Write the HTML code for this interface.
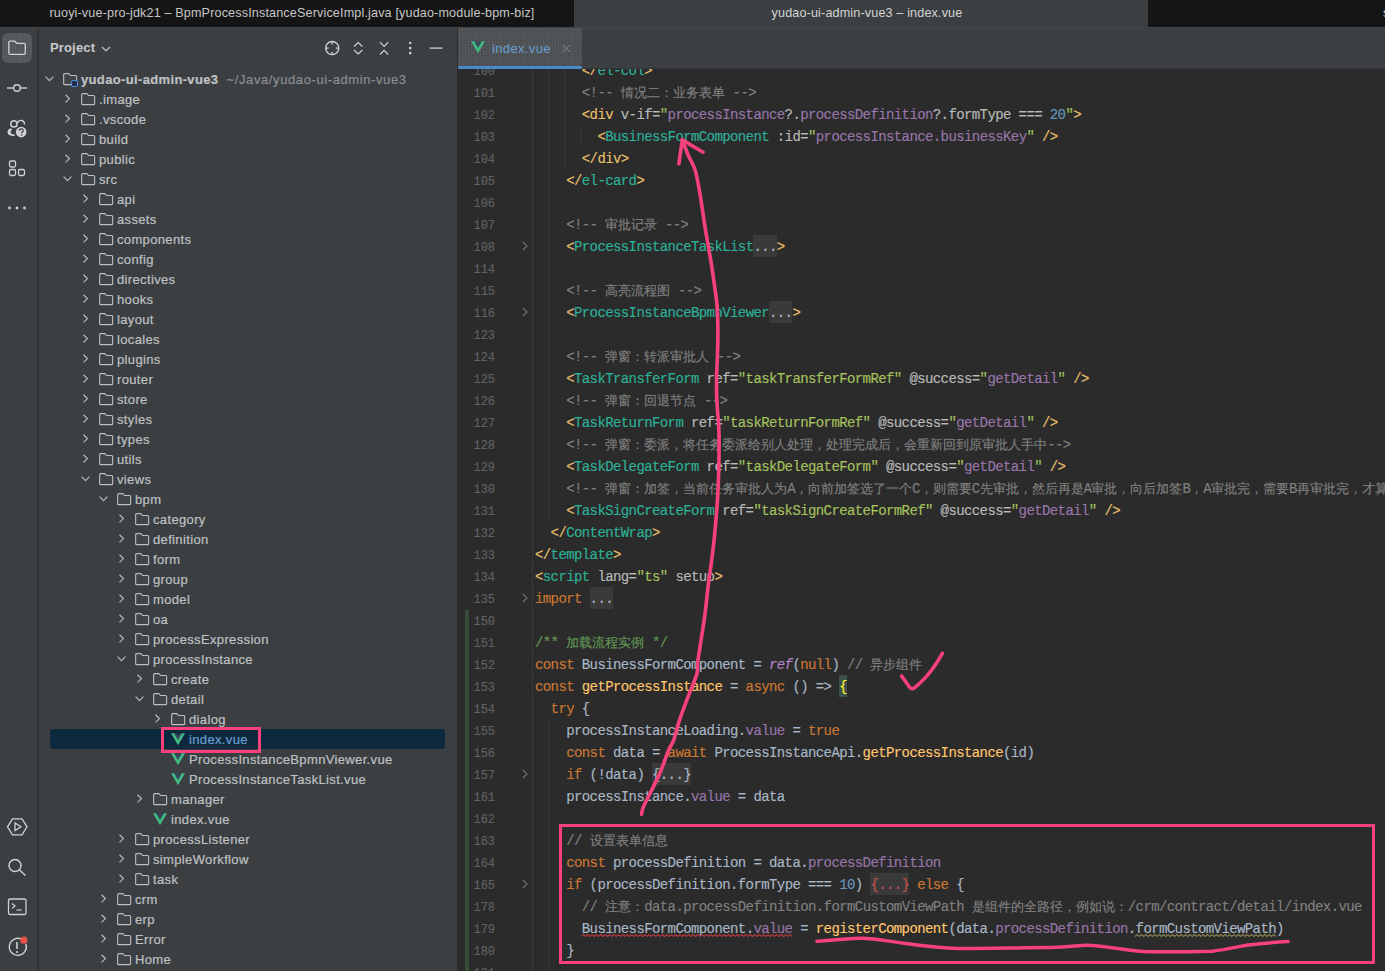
<!DOCTYPE html><html><head><meta charset="utf-8"><style>
*{box-sizing:border-box}
html,body{margin:0;padding:0}
body{width:1385px;height:971px;overflow:hidden;position:relative;background:#2b2b2b;font-family:"Liberation Sans",sans-serif}
.a{position:absolute}
.tr{position:absolute;height:20px;line-height:21px;font-size:13px;letter-spacing:0.35px;-webkit-text-stroke:0.2px currentColor;color:#bfc1c4;white-space:nowrap}
.cl{position:absolute;left:535px;width:850px;height:22px;line-height:23px;font-family:"Liberation Mono",monospace;font-size:14px;letter-spacing:-0.6px;white-space:pre;color:#a9b7c6;-webkit-text-stroke:0.15px currentColor}
.ck,.cj{position:absolute;top:0}
.cj{width:13px;font-size:13px;letter-spacing:0;overflow:hidden}
.fb{position:absolute;top:-1px;height:22px}
.ln{position:absolute;left:460px;width:34.75px;text-align:right;height:22px;line-height:25px;font-family:"Liberation Mono",monospace;font-size:12px;letter-spacing:-0.15px;color:#5f6265;-webkit-text-stroke:0.15px currentColor}
</style></head><body>

<div class="a" style="left:0;top:0;width:1385px;height:27px;background:#151515"></div>
<div class="a" style="left:574px;top:0;width:574px;height:27px;background:#3c3f41"></div>
<div class="a" style="left:5px;top:0;width:574px;height:27px;line-height:26px;text-align:center;font-size:12.6px;letter-spacing:0.15px;color:#c6c6c6">ruoyi-vue-pro-jdk21 – BpmProcessInstanceServiceImpl.java [yudao-module-bpm-biz]</div>
<div class="a" style="left:580px;top:0;width:574px;height:27px;line-height:26px;text-align:center;font-size:12.6px;letter-spacing:0.15px;color:#d4d4d4">yudao-ui-admin-vue3 – index.vue</div>
<div class="a" style="left:1383px;top:0;width:2px;height:27px;overflow:hidden"><div style="position:absolute;left:0;top:0;line-height:26px;font-size:12.6px;color:#c6c6c6">s</div></div>
<div class="a" style="left:0;top:27px;width:37px;height:944px;background:#3c3f41"></div>
<div class="a" style="left:37px;top:27px;width:2px;height:944px;background:#313335"></div>
<div class="a" style="left:39px;top:27px;width:418px;height:944px;background:#3c3f41"></div>
<div class="a" style="left:457px;top:27px;width:1px;height:944px;background:#2b2b2b"></div>
<div class="a" style="left:458px;top:27px;width:927px;height:42px;background:#3c3f41"></div>
<div class="a" style="left:50px;top:37px;height:20px;line-height:22px;font-size:13px;font-weight:bold;letter-spacing:0.15px;color:#c9cacc">Project</div>
<svg width="12" height="8" viewBox="0 0 12 8" style="position:absolute;left:44px;top:75px"><path d="M1.6 1.7L5.5 5.6 9.4 1.7" fill="none" stroke="#b8babd" stroke-width="1.2"/></svg>
<svg width="16" height="20" viewBox="0 0 16 20" style="position:absolute;left:62px;top:69px"><path d="M1.65 5.65c0-.55.45-1 1-1h4.2l1.8 1.9h5c.55 0 1 .45 1 1v7.1c0 .55-.45 1-1 1H2.65c-.55 0-1-.45-1-1z" fill="#414448" stroke="#bcbec1" stroke-width="1.1"/></svg>
<div class="tr" style="left:81px;top:69px;color:#bfc1c4;font-weight:bold">yudao-ui-admin-vue3 <span style="font-weight:normal;color:#8c8e91;letter-spacing:0.6px">&nbsp;~/Java/yudao-ui-admin-vue3</span></div>
<svg width="8" height="10" viewBox="0 0 8 10" style="position:absolute;left:64px;top:94px"><path d="M1.5 0.8L5.4 4.6 1.5 8.4" fill="none" stroke="#b8babd" stroke-width="1.2"/></svg>
<svg width="16" height="20" viewBox="0 0 16 20" style="position:absolute;left:80px;top:89px"><path d="M1.65 5.65c0-.55.45-1 1-1h4.2l1.8 1.9h5c.55 0 1 .45 1 1v7.1c0 .55-.45 1-1 1H2.65c-.55 0-1-.45-1-1z" fill="#414448" stroke="#bcbec1" stroke-width="1.1"/></svg>
<div class="tr" style="left:99px;top:89px;color:#bfc1c4;font-weight:normal">.image</div>
<svg width="8" height="10" viewBox="0 0 8 10" style="position:absolute;left:64px;top:114px"><path d="M1.5 0.8L5.4 4.6 1.5 8.4" fill="none" stroke="#b8babd" stroke-width="1.2"/></svg>
<svg width="16" height="20" viewBox="0 0 16 20" style="position:absolute;left:80px;top:109px"><path d="M1.65 5.65c0-.55.45-1 1-1h4.2l1.8 1.9h5c.55 0 1 .45 1 1v7.1c0 .55-.45 1-1 1H2.65c-.55 0-1-.45-1-1z" fill="#414448" stroke="#bcbec1" stroke-width="1.1"/></svg>
<div class="tr" style="left:99px;top:109px;color:#bfc1c4;font-weight:normal">.vscode</div>
<svg width="8" height="10" viewBox="0 0 8 10" style="position:absolute;left:64px;top:134px"><path d="M1.5 0.8L5.4 4.6 1.5 8.4" fill="none" stroke="#b8babd" stroke-width="1.2"/></svg>
<svg width="16" height="20" viewBox="0 0 16 20" style="position:absolute;left:80px;top:129px"><path d="M1.65 5.65c0-.55.45-1 1-1h4.2l1.8 1.9h5c.55 0 1 .45 1 1v7.1c0 .55-.45 1-1 1H2.65c-.55 0-1-.45-1-1z" fill="#414448" stroke="#bcbec1" stroke-width="1.1"/></svg>
<div class="tr" style="left:99px;top:129px;color:#bfc1c4;font-weight:normal">build</div>
<svg width="8" height="10" viewBox="0 0 8 10" style="position:absolute;left:64px;top:154px"><path d="M1.5 0.8L5.4 4.6 1.5 8.4" fill="none" stroke="#b8babd" stroke-width="1.2"/></svg>
<svg width="16" height="20" viewBox="0 0 16 20" style="position:absolute;left:80px;top:149px"><path d="M1.65 5.65c0-.55.45-1 1-1h4.2l1.8 1.9h5c.55 0 1 .45 1 1v7.1c0 .55-.45 1-1 1H2.65c-.55 0-1-.45-1-1z" fill="#414448" stroke="#bcbec1" stroke-width="1.1"/></svg>
<div class="tr" style="left:99px;top:149px;color:#bfc1c4;font-weight:normal">public</div>
<svg width="12" height="8" viewBox="0 0 12 8" style="position:absolute;left:62px;top:175px"><path d="M1.6 1.7L5.5 5.6 9.4 1.7" fill="none" stroke="#b8babd" stroke-width="1.2"/></svg>
<svg width="16" height="20" viewBox="0 0 16 20" style="position:absolute;left:80px;top:169px"><path d="M1.65 5.65c0-.55.45-1 1-1h4.2l1.8 1.9h5c.55 0 1 .45 1 1v7.1c0 .55-.45 1-1 1H2.65c-.55 0-1-.45-1-1z" fill="#414448" stroke="#bcbec1" stroke-width="1.1"/></svg>
<div class="tr" style="left:99px;top:169px;color:#bfc1c4;font-weight:normal">src</div>
<svg width="8" height="10" viewBox="0 0 8 10" style="position:absolute;left:82px;top:194px"><path d="M1.5 0.8L5.4 4.6 1.5 8.4" fill="none" stroke="#b8babd" stroke-width="1.2"/></svg>
<svg width="16" height="20" viewBox="0 0 16 20" style="position:absolute;left:98px;top:189px"><path d="M1.65 5.65c0-.55.45-1 1-1h4.2l1.8 1.9h5c.55 0 1 .45 1 1v7.1c0 .55-.45 1-1 1H2.65c-.55 0-1-.45-1-1z" fill="#414448" stroke="#bcbec1" stroke-width="1.1"/></svg>
<div class="tr" style="left:117px;top:189px;color:#bfc1c4;font-weight:normal">api</div>
<svg width="8" height="10" viewBox="0 0 8 10" style="position:absolute;left:82px;top:214px"><path d="M1.5 0.8L5.4 4.6 1.5 8.4" fill="none" stroke="#b8babd" stroke-width="1.2"/></svg>
<svg width="16" height="20" viewBox="0 0 16 20" style="position:absolute;left:98px;top:209px"><path d="M1.65 5.65c0-.55.45-1 1-1h4.2l1.8 1.9h5c.55 0 1 .45 1 1v7.1c0 .55-.45 1-1 1H2.65c-.55 0-1-.45-1-1z" fill="#414448" stroke="#bcbec1" stroke-width="1.1"/></svg>
<div class="tr" style="left:117px;top:209px;color:#bfc1c4;font-weight:normal">assets</div>
<svg width="8" height="10" viewBox="0 0 8 10" style="position:absolute;left:82px;top:234px"><path d="M1.5 0.8L5.4 4.6 1.5 8.4" fill="none" stroke="#b8babd" stroke-width="1.2"/></svg>
<svg width="16" height="20" viewBox="0 0 16 20" style="position:absolute;left:98px;top:229px"><path d="M1.65 5.65c0-.55.45-1 1-1h4.2l1.8 1.9h5c.55 0 1 .45 1 1v7.1c0 .55-.45 1-1 1H2.65c-.55 0-1-.45-1-1z" fill="#414448" stroke="#bcbec1" stroke-width="1.1"/></svg>
<div class="tr" style="left:117px;top:229px;color:#bfc1c4;font-weight:normal">components</div>
<svg width="8" height="10" viewBox="0 0 8 10" style="position:absolute;left:82px;top:254px"><path d="M1.5 0.8L5.4 4.6 1.5 8.4" fill="none" stroke="#b8babd" stroke-width="1.2"/></svg>
<svg width="16" height="20" viewBox="0 0 16 20" style="position:absolute;left:98px;top:249px"><path d="M1.65 5.65c0-.55.45-1 1-1h4.2l1.8 1.9h5c.55 0 1 .45 1 1v7.1c0 .55-.45 1-1 1H2.65c-.55 0-1-.45-1-1z" fill="#414448" stroke="#bcbec1" stroke-width="1.1"/></svg>
<div class="tr" style="left:117px;top:249px;color:#bfc1c4;font-weight:normal">config</div>
<svg width="8" height="10" viewBox="0 0 8 10" style="position:absolute;left:82px;top:274px"><path d="M1.5 0.8L5.4 4.6 1.5 8.4" fill="none" stroke="#b8babd" stroke-width="1.2"/></svg>
<svg width="16" height="20" viewBox="0 0 16 20" style="position:absolute;left:98px;top:269px"><path d="M1.65 5.65c0-.55.45-1 1-1h4.2l1.8 1.9h5c.55 0 1 .45 1 1v7.1c0 .55-.45 1-1 1H2.65c-.55 0-1-.45-1-1z" fill="#414448" stroke="#bcbec1" stroke-width="1.1"/></svg>
<div class="tr" style="left:117px;top:269px;color:#bfc1c4;font-weight:normal">directives</div>
<svg width="8" height="10" viewBox="0 0 8 10" style="position:absolute;left:82px;top:294px"><path d="M1.5 0.8L5.4 4.6 1.5 8.4" fill="none" stroke="#b8babd" stroke-width="1.2"/></svg>
<svg width="16" height="20" viewBox="0 0 16 20" style="position:absolute;left:98px;top:289px"><path d="M1.65 5.65c0-.55.45-1 1-1h4.2l1.8 1.9h5c.55 0 1 .45 1 1v7.1c0 .55-.45 1-1 1H2.65c-.55 0-1-.45-1-1z" fill="#414448" stroke="#bcbec1" stroke-width="1.1"/></svg>
<div class="tr" style="left:117px;top:289px;color:#bfc1c4;font-weight:normal">hooks</div>
<svg width="8" height="10" viewBox="0 0 8 10" style="position:absolute;left:82px;top:314px"><path d="M1.5 0.8L5.4 4.6 1.5 8.4" fill="none" stroke="#b8babd" stroke-width="1.2"/></svg>
<svg width="16" height="20" viewBox="0 0 16 20" style="position:absolute;left:98px;top:309px"><path d="M1.65 5.65c0-.55.45-1 1-1h4.2l1.8 1.9h5c.55 0 1 .45 1 1v7.1c0 .55-.45 1-1 1H2.65c-.55 0-1-.45-1-1z" fill="#414448" stroke="#bcbec1" stroke-width="1.1"/></svg>
<div class="tr" style="left:117px;top:309px;color:#bfc1c4;font-weight:normal">layout</div>
<svg width="8" height="10" viewBox="0 0 8 10" style="position:absolute;left:82px;top:334px"><path d="M1.5 0.8L5.4 4.6 1.5 8.4" fill="none" stroke="#b8babd" stroke-width="1.2"/></svg>
<svg width="16" height="20" viewBox="0 0 16 20" style="position:absolute;left:98px;top:329px"><path d="M1.65 5.65c0-.55.45-1 1-1h4.2l1.8 1.9h5c.55 0 1 .45 1 1v7.1c0 .55-.45 1-1 1H2.65c-.55 0-1-.45-1-1z" fill="#414448" stroke="#bcbec1" stroke-width="1.1"/></svg>
<div class="tr" style="left:117px;top:329px;color:#bfc1c4;font-weight:normal">locales</div>
<svg width="8" height="10" viewBox="0 0 8 10" style="position:absolute;left:82px;top:354px"><path d="M1.5 0.8L5.4 4.6 1.5 8.4" fill="none" stroke="#b8babd" stroke-width="1.2"/></svg>
<svg width="16" height="20" viewBox="0 0 16 20" style="position:absolute;left:98px;top:349px"><path d="M1.65 5.65c0-.55.45-1 1-1h4.2l1.8 1.9h5c.55 0 1 .45 1 1v7.1c0 .55-.45 1-1 1H2.65c-.55 0-1-.45-1-1z" fill="#414448" stroke="#bcbec1" stroke-width="1.1"/></svg>
<div class="tr" style="left:117px;top:349px;color:#bfc1c4;font-weight:normal">plugins</div>
<svg width="8" height="10" viewBox="0 0 8 10" style="position:absolute;left:82px;top:374px"><path d="M1.5 0.8L5.4 4.6 1.5 8.4" fill="none" stroke="#b8babd" stroke-width="1.2"/></svg>
<svg width="16" height="20" viewBox="0 0 16 20" style="position:absolute;left:98px;top:369px"><path d="M1.65 5.65c0-.55.45-1 1-1h4.2l1.8 1.9h5c.55 0 1 .45 1 1v7.1c0 .55-.45 1-1 1H2.65c-.55 0-1-.45-1-1z" fill="#414448" stroke="#bcbec1" stroke-width="1.1"/></svg>
<div class="tr" style="left:117px;top:369px;color:#bfc1c4;font-weight:normal">router</div>
<svg width="8" height="10" viewBox="0 0 8 10" style="position:absolute;left:82px;top:394px"><path d="M1.5 0.8L5.4 4.6 1.5 8.4" fill="none" stroke="#b8babd" stroke-width="1.2"/></svg>
<svg width="16" height="20" viewBox="0 0 16 20" style="position:absolute;left:98px;top:389px"><path d="M1.65 5.65c0-.55.45-1 1-1h4.2l1.8 1.9h5c.55 0 1 .45 1 1v7.1c0 .55-.45 1-1 1H2.65c-.55 0-1-.45-1-1z" fill="#414448" stroke="#bcbec1" stroke-width="1.1"/></svg>
<div class="tr" style="left:117px;top:389px;color:#bfc1c4;font-weight:normal">store</div>
<svg width="8" height="10" viewBox="0 0 8 10" style="position:absolute;left:82px;top:414px"><path d="M1.5 0.8L5.4 4.6 1.5 8.4" fill="none" stroke="#b8babd" stroke-width="1.2"/></svg>
<svg width="16" height="20" viewBox="0 0 16 20" style="position:absolute;left:98px;top:409px"><path d="M1.65 5.65c0-.55.45-1 1-1h4.2l1.8 1.9h5c.55 0 1 .45 1 1v7.1c0 .55-.45 1-1 1H2.65c-.55 0-1-.45-1-1z" fill="#414448" stroke="#bcbec1" stroke-width="1.1"/></svg>
<div class="tr" style="left:117px;top:409px;color:#bfc1c4;font-weight:normal">styles</div>
<svg width="8" height="10" viewBox="0 0 8 10" style="position:absolute;left:82px;top:434px"><path d="M1.5 0.8L5.4 4.6 1.5 8.4" fill="none" stroke="#b8babd" stroke-width="1.2"/></svg>
<svg width="16" height="20" viewBox="0 0 16 20" style="position:absolute;left:98px;top:429px"><path d="M1.65 5.65c0-.55.45-1 1-1h4.2l1.8 1.9h5c.55 0 1 .45 1 1v7.1c0 .55-.45 1-1 1H2.65c-.55 0-1-.45-1-1z" fill="#414448" stroke="#bcbec1" stroke-width="1.1"/></svg>
<div class="tr" style="left:117px;top:429px;color:#bfc1c4;font-weight:normal">types</div>
<svg width="8" height="10" viewBox="0 0 8 10" style="position:absolute;left:82px;top:454px"><path d="M1.5 0.8L5.4 4.6 1.5 8.4" fill="none" stroke="#b8babd" stroke-width="1.2"/></svg>
<svg width="16" height="20" viewBox="0 0 16 20" style="position:absolute;left:98px;top:449px"><path d="M1.65 5.65c0-.55.45-1 1-1h4.2l1.8 1.9h5c.55 0 1 .45 1 1v7.1c0 .55-.45 1-1 1H2.65c-.55 0-1-.45-1-1z" fill="#414448" stroke="#bcbec1" stroke-width="1.1"/></svg>
<div class="tr" style="left:117px;top:449px;color:#bfc1c4;font-weight:normal">utils</div>
<svg width="12" height="8" viewBox="0 0 12 8" style="position:absolute;left:80px;top:475px"><path d="M1.6 1.7L5.5 5.6 9.4 1.7" fill="none" stroke="#b8babd" stroke-width="1.2"/></svg>
<svg width="16" height="20" viewBox="0 0 16 20" style="position:absolute;left:98px;top:469px"><path d="M1.65 5.65c0-.55.45-1 1-1h4.2l1.8 1.9h5c.55 0 1 .45 1 1v7.1c0 .55-.45 1-1 1H2.65c-.55 0-1-.45-1-1z" fill="#414448" stroke="#bcbec1" stroke-width="1.1"/></svg>
<div class="tr" style="left:117px;top:469px;color:#bfc1c4;font-weight:normal">views</div>
<svg width="12" height="8" viewBox="0 0 12 8" style="position:absolute;left:98px;top:495px"><path d="M1.6 1.7L5.5 5.6 9.4 1.7" fill="none" stroke="#b8babd" stroke-width="1.2"/></svg>
<svg width="16" height="20" viewBox="0 0 16 20" style="position:absolute;left:116px;top:489px"><path d="M1.65 5.65c0-.55.45-1 1-1h4.2l1.8 1.9h5c.55 0 1 .45 1 1v7.1c0 .55-.45 1-1 1H2.65c-.55 0-1-.45-1-1z" fill="#414448" stroke="#bcbec1" stroke-width="1.1"/></svg>
<div class="tr" style="left:135px;top:489px;color:#bfc1c4;font-weight:normal">bpm</div>
<svg width="8" height="10" viewBox="0 0 8 10" style="position:absolute;left:118px;top:514px"><path d="M1.5 0.8L5.4 4.6 1.5 8.4" fill="none" stroke="#b8babd" stroke-width="1.2"/></svg>
<svg width="16" height="20" viewBox="0 0 16 20" style="position:absolute;left:134px;top:509px"><path d="M1.65 5.65c0-.55.45-1 1-1h4.2l1.8 1.9h5c.55 0 1 .45 1 1v7.1c0 .55-.45 1-1 1H2.65c-.55 0-1-.45-1-1z" fill="#414448" stroke="#bcbec1" stroke-width="1.1"/></svg>
<div class="tr" style="left:153px;top:509px;color:#bfc1c4;font-weight:normal">category</div>
<svg width="8" height="10" viewBox="0 0 8 10" style="position:absolute;left:118px;top:534px"><path d="M1.5 0.8L5.4 4.6 1.5 8.4" fill="none" stroke="#b8babd" stroke-width="1.2"/></svg>
<svg width="16" height="20" viewBox="0 0 16 20" style="position:absolute;left:134px;top:529px"><path d="M1.65 5.65c0-.55.45-1 1-1h4.2l1.8 1.9h5c.55 0 1 .45 1 1v7.1c0 .55-.45 1-1 1H2.65c-.55 0-1-.45-1-1z" fill="#414448" stroke="#bcbec1" stroke-width="1.1"/></svg>
<div class="tr" style="left:153px;top:529px;color:#bfc1c4;font-weight:normal">definition</div>
<svg width="8" height="10" viewBox="0 0 8 10" style="position:absolute;left:118px;top:554px"><path d="M1.5 0.8L5.4 4.6 1.5 8.4" fill="none" stroke="#b8babd" stroke-width="1.2"/></svg>
<svg width="16" height="20" viewBox="0 0 16 20" style="position:absolute;left:134px;top:549px"><path d="M1.65 5.65c0-.55.45-1 1-1h4.2l1.8 1.9h5c.55 0 1 .45 1 1v7.1c0 .55-.45 1-1 1H2.65c-.55 0-1-.45-1-1z" fill="#414448" stroke="#bcbec1" stroke-width="1.1"/></svg>
<div class="tr" style="left:153px;top:549px;color:#bfc1c4;font-weight:normal">form</div>
<svg width="8" height="10" viewBox="0 0 8 10" style="position:absolute;left:118px;top:574px"><path d="M1.5 0.8L5.4 4.6 1.5 8.4" fill="none" stroke="#b8babd" stroke-width="1.2"/></svg>
<svg width="16" height="20" viewBox="0 0 16 20" style="position:absolute;left:134px;top:569px"><path d="M1.65 5.65c0-.55.45-1 1-1h4.2l1.8 1.9h5c.55 0 1 .45 1 1v7.1c0 .55-.45 1-1 1H2.65c-.55 0-1-.45-1-1z" fill="#414448" stroke="#bcbec1" stroke-width="1.1"/></svg>
<div class="tr" style="left:153px;top:569px;color:#bfc1c4;font-weight:normal">group</div>
<svg width="8" height="10" viewBox="0 0 8 10" style="position:absolute;left:118px;top:594px"><path d="M1.5 0.8L5.4 4.6 1.5 8.4" fill="none" stroke="#b8babd" stroke-width="1.2"/></svg>
<svg width="16" height="20" viewBox="0 0 16 20" style="position:absolute;left:134px;top:589px"><path d="M1.65 5.65c0-.55.45-1 1-1h4.2l1.8 1.9h5c.55 0 1 .45 1 1v7.1c0 .55-.45 1-1 1H2.65c-.55 0-1-.45-1-1z" fill="#414448" stroke="#bcbec1" stroke-width="1.1"/></svg>
<div class="tr" style="left:153px;top:589px;color:#bfc1c4;font-weight:normal">model</div>
<svg width="8" height="10" viewBox="0 0 8 10" style="position:absolute;left:118px;top:614px"><path d="M1.5 0.8L5.4 4.6 1.5 8.4" fill="none" stroke="#b8babd" stroke-width="1.2"/></svg>
<svg width="16" height="20" viewBox="0 0 16 20" style="position:absolute;left:134px;top:609px"><path d="M1.65 5.65c0-.55.45-1 1-1h4.2l1.8 1.9h5c.55 0 1 .45 1 1v7.1c0 .55-.45 1-1 1H2.65c-.55 0-1-.45-1-1z" fill="#414448" stroke="#bcbec1" stroke-width="1.1"/></svg>
<div class="tr" style="left:153px;top:609px;color:#bfc1c4;font-weight:normal">oa</div>
<svg width="8" height="10" viewBox="0 0 8 10" style="position:absolute;left:118px;top:634px"><path d="M1.5 0.8L5.4 4.6 1.5 8.4" fill="none" stroke="#b8babd" stroke-width="1.2"/></svg>
<svg width="16" height="20" viewBox="0 0 16 20" style="position:absolute;left:134px;top:629px"><path d="M1.65 5.65c0-.55.45-1 1-1h4.2l1.8 1.9h5c.55 0 1 .45 1 1v7.1c0 .55-.45 1-1 1H2.65c-.55 0-1-.45-1-1z" fill="#414448" stroke="#bcbec1" stroke-width="1.1"/></svg>
<div class="tr" style="left:153px;top:629px;color:#bfc1c4;font-weight:normal">processExpression</div>
<svg width="12" height="8" viewBox="0 0 12 8" style="position:absolute;left:116px;top:655px"><path d="M1.6 1.7L5.5 5.6 9.4 1.7" fill="none" stroke="#b8babd" stroke-width="1.2"/></svg>
<svg width="16" height="20" viewBox="0 0 16 20" style="position:absolute;left:134px;top:649px"><path d="M1.65 5.65c0-.55.45-1 1-1h4.2l1.8 1.9h5c.55 0 1 .45 1 1v7.1c0 .55-.45 1-1 1H2.65c-.55 0-1-.45-1-1z" fill="#414448" stroke="#bcbec1" stroke-width="1.1"/></svg>
<div class="tr" style="left:153px;top:649px;color:#bfc1c4;font-weight:normal">processInstance</div>
<svg width="8" height="10" viewBox="0 0 8 10" style="position:absolute;left:136px;top:674px"><path d="M1.5 0.8L5.4 4.6 1.5 8.4" fill="none" stroke="#b8babd" stroke-width="1.2"/></svg>
<svg width="16" height="20" viewBox="0 0 16 20" style="position:absolute;left:152px;top:669px"><path d="M1.65 5.65c0-.55.45-1 1-1h4.2l1.8 1.9h5c.55 0 1 .45 1 1v7.1c0 .55-.45 1-1 1H2.65c-.55 0-1-.45-1-1z" fill="#414448" stroke="#bcbec1" stroke-width="1.1"/></svg>
<div class="tr" style="left:171px;top:669px;color:#bfc1c4;font-weight:normal">create</div>
<svg width="12" height="8" viewBox="0 0 12 8" style="position:absolute;left:134px;top:695px"><path d="M1.6 1.7L5.5 5.6 9.4 1.7" fill="none" stroke="#b8babd" stroke-width="1.2"/></svg>
<svg width="16" height="20" viewBox="0 0 16 20" style="position:absolute;left:152px;top:689px"><path d="M1.65 5.65c0-.55.45-1 1-1h4.2l1.8 1.9h5c.55 0 1 .45 1 1v7.1c0 .55-.45 1-1 1H2.65c-.55 0-1-.45-1-1z" fill="#414448" stroke="#bcbec1" stroke-width="1.1"/></svg>
<div class="tr" style="left:171px;top:689px;color:#bfc1c4;font-weight:normal">detail</div>
<svg width="8" height="10" viewBox="0 0 8 10" style="position:absolute;left:154px;top:714px"><path d="M1.5 0.8L5.4 4.6 1.5 8.4" fill="none" stroke="#b8babd" stroke-width="1.2"/></svg>
<svg width="16" height="20" viewBox="0 0 16 20" style="position:absolute;left:170px;top:709px"><path d="M1.65 5.65c0-.55.45-1 1-1h4.2l1.8 1.9h5c.55 0 1 .45 1 1v7.1c0 .55-.45 1-1 1H2.65c-.55 0-1-.45-1-1z" fill="#414448" stroke="#bcbec1" stroke-width="1.1"/></svg>
<div class="tr" style="left:189px;top:709px;color:#bfc1c4;font-weight:normal">dialog</div>
<div class="a" style="left:50px;top:729px;width:395px;height:20px;background:#0d293e;border-radius:3px"></div>
<svg width="14" height="13" viewBox="0 0 14 13" style="position:absolute;left:171px;top:733px"><path d="M0 0.3h3.3L7 6.8 10.7 0.3H14L7 12.3z" fill="#42b883"/><path d="M3.3 0.3h2.3L7 2.8 8.4 0.3h2.3L7 6.8z" fill="#34495e"/></svg>
<div class="tr" style="left:189px;top:729px;color:#6a9fd3;font-weight:normal">index.vue</div>
<svg width="14" height="13" viewBox="0 0 14 13" style="position:absolute;left:171px;top:753px"><path d="M0 0.3h3.3L7 6.8 10.7 0.3H14L7 12.3z" fill="#42b883"/><path d="M3.3 0.3h2.3L7 2.8 8.4 0.3h2.3L7 6.8z" fill="#34495e"/></svg>
<div class="tr" style="left:189px;top:749px;color:#bfc1c4;font-weight:normal">ProcessInstanceBpmnViewer.vue</div>
<svg width="14" height="13" viewBox="0 0 14 13" style="position:absolute;left:171px;top:773px"><path d="M0 0.3h3.3L7 6.8 10.7 0.3H14L7 12.3z" fill="#42b883"/><path d="M3.3 0.3h2.3L7 2.8 8.4 0.3h2.3L7 6.8z" fill="#34495e"/></svg>
<div class="tr" style="left:189px;top:769px;color:#bfc1c4;font-weight:normal">ProcessInstanceTaskList.vue</div>
<svg width="8" height="10" viewBox="0 0 8 10" style="position:absolute;left:136px;top:794px"><path d="M1.5 0.8L5.4 4.6 1.5 8.4" fill="none" stroke="#b8babd" stroke-width="1.2"/></svg>
<svg width="16" height="20" viewBox="0 0 16 20" style="position:absolute;left:152px;top:789px"><path d="M1.65 5.65c0-.55.45-1 1-1h4.2l1.8 1.9h5c.55 0 1 .45 1 1v7.1c0 .55-.45 1-1 1H2.65c-.55 0-1-.45-1-1z" fill="#414448" stroke="#bcbec1" stroke-width="1.1"/></svg>
<div class="tr" style="left:171px;top:789px;color:#bfc1c4;font-weight:normal">manager</div>
<svg width="14" height="13" viewBox="0 0 14 13" style="position:absolute;left:153px;top:813px"><path d="M0 0.3h3.3L7 6.8 10.7 0.3H14L7 12.3z" fill="#42b883"/><path d="M3.3 0.3h2.3L7 2.8 8.4 0.3h2.3L7 6.8z" fill="#34495e"/></svg>
<div class="tr" style="left:171px;top:809px;color:#bfc1c4;font-weight:normal">index.vue</div>
<svg width="8" height="10" viewBox="0 0 8 10" style="position:absolute;left:118px;top:834px"><path d="M1.5 0.8L5.4 4.6 1.5 8.4" fill="none" stroke="#b8babd" stroke-width="1.2"/></svg>
<svg width="16" height="20" viewBox="0 0 16 20" style="position:absolute;left:134px;top:829px"><path d="M1.65 5.65c0-.55.45-1 1-1h4.2l1.8 1.9h5c.55 0 1 .45 1 1v7.1c0 .55-.45 1-1 1H2.65c-.55 0-1-.45-1-1z" fill="#414448" stroke="#bcbec1" stroke-width="1.1"/></svg>
<div class="tr" style="left:153px;top:829px;color:#bfc1c4;font-weight:normal">processListener</div>
<svg width="8" height="10" viewBox="0 0 8 10" style="position:absolute;left:118px;top:854px"><path d="M1.5 0.8L5.4 4.6 1.5 8.4" fill="none" stroke="#b8babd" stroke-width="1.2"/></svg>
<svg width="16" height="20" viewBox="0 0 16 20" style="position:absolute;left:134px;top:849px"><path d="M1.65 5.65c0-.55.45-1 1-1h4.2l1.8 1.9h5c.55 0 1 .45 1 1v7.1c0 .55-.45 1-1 1H2.65c-.55 0-1-.45-1-1z" fill="#414448" stroke="#bcbec1" stroke-width="1.1"/></svg>
<div class="tr" style="left:153px;top:849px;color:#bfc1c4;font-weight:normal">simpleWorkflow</div>
<svg width="8" height="10" viewBox="0 0 8 10" style="position:absolute;left:118px;top:874px"><path d="M1.5 0.8L5.4 4.6 1.5 8.4" fill="none" stroke="#b8babd" stroke-width="1.2"/></svg>
<svg width="16" height="20" viewBox="0 0 16 20" style="position:absolute;left:134px;top:869px"><path d="M1.65 5.65c0-.55.45-1 1-1h4.2l1.8 1.9h5c.55 0 1 .45 1 1v7.1c0 .55-.45 1-1 1H2.65c-.55 0-1-.45-1-1z" fill="#414448" stroke="#bcbec1" stroke-width="1.1"/></svg>
<div class="tr" style="left:153px;top:869px;color:#bfc1c4;font-weight:normal">task</div>
<svg width="8" height="10" viewBox="0 0 8 10" style="position:absolute;left:100px;top:894px"><path d="M1.5 0.8L5.4 4.6 1.5 8.4" fill="none" stroke="#b8babd" stroke-width="1.2"/></svg>
<svg width="16" height="20" viewBox="0 0 16 20" style="position:absolute;left:116px;top:889px"><path d="M1.65 5.65c0-.55.45-1 1-1h4.2l1.8 1.9h5c.55 0 1 .45 1 1v7.1c0 .55-.45 1-1 1H2.65c-.55 0-1-.45-1-1z" fill="#414448" stroke="#bcbec1" stroke-width="1.1"/></svg>
<div class="tr" style="left:135px;top:889px;color:#bfc1c4;font-weight:normal">crm</div>
<svg width="8" height="10" viewBox="0 0 8 10" style="position:absolute;left:100px;top:914px"><path d="M1.5 0.8L5.4 4.6 1.5 8.4" fill="none" stroke="#b8babd" stroke-width="1.2"/></svg>
<svg width="16" height="20" viewBox="0 0 16 20" style="position:absolute;left:116px;top:909px"><path d="M1.65 5.65c0-.55.45-1 1-1h4.2l1.8 1.9h5c.55 0 1 .45 1 1v7.1c0 .55-.45 1-1 1H2.65c-.55 0-1-.45-1-1z" fill="#414448" stroke="#bcbec1" stroke-width="1.1"/></svg>
<div class="tr" style="left:135px;top:909px;color:#bfc1c4;font-weight:normal">erp</div>
<svg width="8" height="10" viewBox="0 0 8 10" style="position:absolute;left:100px;top:934px"><path d="M1.5 0.8L5.4 4.6 1.5 8.4" fill="none" stroke="#b8babd" stroke-width="1.2"/></svg>
<svg width="16" height="20" viewBox="0 0 16 20" style="position:absolute;left:116px;top:929px"><path d="M1.65 5.65c0-.55.45-1 1-1h4.2l1.8 1.9h5c.55 0 1 .45 1 1v7.1c0 .55-.45 1-1 1H2.65c-.55 0-1-.45-1-1z" fill="#414448" stroke="#bcbec1" stroke-width="1.1"/></svg>
<div class="tr" style="left:135px;top:929px;color:#bfc1c4;font-weight:normal">Error</div>
<svg width="8" height="10" viewBox="0 0 8 10" style="position:absolute;left:100px;top:954px"><path d="M1.5 0.8L5.4 4.6 1.5 8.4" fill="none" stroke="#b8babd" stroke-width="1.2"/></svg>
<svg width="16" height="20" viewBox="0 0 16 20" style="position:absolute;left:116px;top:949px"><path d="M1.65 5.65c0-.55.45-1 1-1h4.2l1.8 1.9h5c.55 0 1 .45 1 1v7.1c0 .55-.45 1-1 1H2.65c-.55 0-1-.45-1-1z" fill="#414448" stroke="#bcbec1" stroke-width="1.1"/></svg>
<div class="tr" style="left:135px;top:949px;color:#bfc1c4;font-weight:normal">Home</div>
<div class="a" style="left:160.7px;top:726.5px;width:100px;height:26.3px;border:3.3px solid #f7417c"></div>
<div class="a" style="left:458px;top:69px;width:927px;height:902px;background:#2b2b2b"></div>
<div class="ln" style="top:60px">100</div>
<div class="cl" style="top:60px"><span class="ck" style="left:46.8px;color:#e8bf6a">&lt;/</span><span class="ck" style="left:62.4px;color:#2bb197">el-col</span><span class="ck" style="left:109.2px;color:#e8bf6a">&gt;</span></div>
<div class="ln" style="top:82px">101</div>
<div class="cl" style="top:82px"><span class="ck" style="left:46.8px;color:#808080">&lt;!--</span><span class="cj" style="left:85.8px;color:#808080">情</span><span class="cj" style="left:98.8px;color:#808080">况</span><span class="cj" style="left:111.8px;color:#808080">二</span><span class="cj" style="left:124.8px;color:#808080">：</span><span class="cj" style="left:137.8px;color:#808080">业</span><span class="cj" style="left:150.8px;color:#808080">务</span><span class="cj" style="left:163.8px;color:#808080">表</span><span class="cj" style="left:176.8px;color:#808080">单</span><span class="ck" style="left:197.6px;color:#808080">--&gt;</span></div>
<div class="ln" style="top:104px">102</div>
<div class="cl" style="top:104px"><span class="ck" style="left:46.8px;color:#e8bf6a">&lt;div</span><span class="ck" style="left:85.8px;color:#bababa">v-if=</span><span class="ck" style="left:124.8px;color:#a5c25c">&quot;</span><span class="ck" style="left:132.6px;color:#9876aa">processInstance</span><span class="ck" style="left:249.6px;color:#bababa">?.</span><span class="ck" style="left:265.2px;color:#9876aa">processDefinition</span><span class="ck" style="left:397.8px;color:#bababa">?.formType</span><span class="ck" style="left:483.6px;color:#bababa">===</span><span class="ck" style="left:514.8px;color:#6897bb">20</span><span class="ck" style="left:530.4px;color:#a5c25c">&quot;</span><span class="ck" style="left:538.2px;color:#e8bf6a">&gt;</span></div>
<div class="ln" style="top:126px">103</div>
<div class="cl" style="top:126px"><span class="ck" style="left:62.4px;color:#e8bf6a">&lt;</span><span class="ck" style="left:70.2px;color:#2bb197">BusinessFormComponent</span><span class="ck" style="left:241.8px;color:#bababa">:id=</span><span class="ck" style="left:273.0px;color:#a5c25c">&quot;</span><span class="ck" style="left:280.8px;color:#9876aa">processInstance.businessKey</span><span class="ck" style="left:491.4px;color:#a5c25c">&quot;</span><span class="ck" style="left:507.0px;color:#e8bf6a">/&gt;</span></div>
<div class="ln" style="top:148px">104</div>
<div class="cl" style="top:148px"><span class="ck" style="left:46.8px;color:#e8bf6a">&lt;/div&gt;</span></div>
<div class="ln" style="top:170px">105</div>
<div class="cl" style="top:170px"><span class="ck" style="left:31.2px;color:#e8bf6a">&lt;/</span><span class="ck" style="left:46.8px;color:#2bb197">el-card</span><span class="ck" style="left:101.4px;color:#e8bf6a">&gt;</span></div>
<div class="ln" style="top:192px">106</div>
<div class="cl" style="top:192px"></div>
<div class="ln" style="top:214px">107</div>
<div class="cl" style="top:214px"><span class="ck" style="left:31.2px;color:#808080">&lt;!--</span><span class="cj" style="left:70.2px;color:#808080">审</span><span class="cj" style="left:83.2px;color:#808080">批</span><span class="cj" style="left:96.2px;color:#808080">记</span><span class="cj" style="left:109.2px;color:#808080">录</span><span class="ck" style="left:130.0px;color:#808080">--&gt;</span></div>
<div class="ln" style="top:236px">108</div>
<div class="cl" style="top:236px"><span class="ck" style="left:31.2px;color:#e8bf6a">&lt;</span><span class="ck" style="left:39.0px;color:#2bb197">ProcessInstanceTaskList</span><b class="fb" style="left:218.4px;width:23.4px;background:#3a3a3a"></b><span class="ck" style="left:218.4px;color:#a9b7c6">...</span><span class="ck" style="left:241.8px;color:#e8bf6a">&gt;</span></div>
<div class="ln" style="top:258px">114</div>
<div class="cl" style="top:258px"></div>
<div class="ln" style="top:280px">115</div>
<div class="cl" style="top:280px"><span class="ck" style="left:31.2px;color:#808080">&lt;!--</span><span class="cj" style="left:70.2px;color:#808080">高</span><span class="cj" style="left:83.2px;color:#808080">亮</span><span class="cj" style="left:96.2px;color:#808080">流</span><span class="cj" style="left:109.2px;color:#808080">程</span><span class="cj" style="left:122.2px;color:#808080">图</span><span class="ck" style="left:143.0px;color:#808080">--&gt;</span></div>
<div class="ln" style="top:302px">116</div>
<div class="cl" style="top:302px"><span class="ck" style="left:31.2px;color:#e8bf6a">&lt;</span><span class="ck" style="left:39.0px;color:#2bb197">ProcessInstanceBpmnViewer</span><b class="fb" style="left:234.0px;width:23.4px;background:#3a3a3a"></b><span class="ck" style="left:234.0px;color:#a9b7c6">...</span><span class="ck" style="left:257.4px;color:#e8bf6a">&gt;</span></div>
<div class="ln" style="top:324px">123</div>
<div class="cl" style="top:324px"></div>
<div class="ln" style="top:346px">124</div>
<div class="cl" style="top:346px"><span class="ck" style="left:31.2px;color:#808080">&lt;!--</span><span class="cj" style="left:70.2px;color:#808080">弹</span><span class="cj" style="left:83.2px;color:#808080">窗</span><span class="cj" style="left:96.2px;color:#808080">：</span><span class="cj" style="left:109.2px;color:#808080">转</span><span class="cj" style="left:122.2px;color:#808080">派</span><span class="cj" style="left:135.2px;color:#808080">审</span><span class="cj" style="left:148.2px;color:#808080">批</span><span class="cj" style="left:161.2px;color:#808080">人</span><span class="ck" style="left:182.0px;color:#808080">--&gt;</span></div>
<div class="ln" style="top:368px">125</div>
<div class="cl" style="top:368px"><span class="ck" style="left:31.2px;color:#e8bf6a">&lt;</span><span class="ck" style="left:39.0px;color:#2bb197">TaskTransferForm</span><span class="ck" style="left:171.6px;color:#bababa">ref=</span><span class="ck" style="left:202.8px;color:#a5c25c">&quot;taskTransferFormRef&quot;</span><span class="ck" style="left:374.4px;color:#bababa">@success=</span><span class="ck" style="left:444.6px;color:#a5c25c">&quot;</span><span class="ck" style="left:452.4px;color:#9876aa">getDetail</span><span class="ck" style="left:522.6px;color:#a5c25c">&quot;</span><span class="ck" style="left:538.2px;color:#e8bf6a">/&gt;</span></div>
<div class="ln" style="top:390px">126</div>
<div class="cl" style="top:390px"><span class="ck" style="left:31.2px;color:#808080">&lt;!--</span><span class="cj" style="left:70.2px;color:#808080">弹</span><span class="cj" style="left:83.2px;color:#808080">窗</span><span class="cj" style="left:96.2px;color:#808080">：</span><span class="cj" style="left:109.2px;color:#808080">回</span><span class="cj" style="left:122.2px;color:#808080">退</span><span class="cj" style="left:135.2px;color:#808080">节</span><span class="cj" style="left:148.2px;color:#808080">点</span><span class="ck" style="left:169.0px;color:#808080">--&gt;</span></div>
<div class="ln" style="top:412px">127</div>
<div class="cl" style="top:412px"><span class="ck" style="left:31.2px;color:#e8bf6a">&lt;</span><span class="ck" style="left:39.0px;color:#2bb197">TaskReturnForm</span><span class="ck" style="left:156.0px;color:#bababa">ref=</span><span class="ck" style="left:187.2px;color:#a5c25c">&quot;taskReturnFormRef&quot;</span><span class="ck" style="left:343.2px;color:#bababa">@success=</span><span class="ck" style="left:413.4px;color:#a5c25c">&quot;</span><span class="ck" style="left:421.2px;color:#9876aa">getDetail</span><span class="ck" style="left:491.4px;color:#a5c25c">&quot;</span><span class="ck" style="left:507.0px;color:#e8bf6a">/&gt;</span></div>
<div class="ln" style="top:434px">128</div>
<div class="cl" style="top:434px"><span class="ck" style="left:31.2px;color:#808080">&lt;!--</span><span class="cj" style="left:70.2px;color:#808080">弹</span><span class="cj" style="left:83.2px;color:#808080">窗</span><span class="cj" style="left:96.2px;color:#808080">：</span><span class="cj" style="left:109.2px;color:#808080">委</span><span class="cj" style="left:122.2px;color:#808080">派</span><span class="cj" style="left:135.2px;color:#808080">，</span><span class="cj" style="left:148.2px;color:#808080">将</span><span class="cj" style="left:161.2px;color:#808080">任</span><span class="cj" style="left:174.2px;color:#808080">务</span><span class="cj" style="left:187.2px;color:#808080">委</span><span class="cj" style="left:200.2px;color:#808080">派</span><span class="cj" style="left:213.2px;color:#808080">给</span><span class="cj" style="left:226.2px;color:#808080">别</span><span class="cj" style="left:239.2px;color:#808080">人</span><span class="cj" style="left:252.2px;color:#808080">处</span><span class="cj" style="left:265.2px;color:#808080">理</span><span class="cj" style="left:278.2px;color:#808080">，</span><span class="cj" style="left:291.2px;color:#808080">处</span><span class="cj" style="left:304.2px;color:#808080">理</span><span class="cj" style="left:317.2px;color:#808080">完</span><span class="cj" style="left:330.2px;color:#808080">成</span><span class="cj" style="left:343.2px;color:#808080">后</span><span class="cj" style="left:356.2px;color:#808080">，</span><span class="cj" style="left:369.2px;color:#808080">会</span><span class="cj" style="left:382.2px;color:#808080">重</span><span class="cj" style="left:395.2px;color:#808080">新</span><span class="cj" style="left:408.2px;color:#808080">回</span><span class="cj" style="left:421.2px;color:#808080">到</span><span class="cj" style="left:434.2px;color:#808080">原</span><span class="cj" style="left:447.2px;color:#808080">审</span><span class="cj" style="left:460.2px;color:#808080">批</span><span class="cj" style="left:473.2px;color:#808080">人</span><span class="cj" style="left:486.2px;color:#808080">手</span><span class="cj" style="left:499.2px;color:#808080">中</span><span class="ck" style="left:512.2px;color:#808080">--&gt;</span></div>
<div class="ln" style="top:456px">129</div>
<div class="cl" style="top:456px"><span class="ck" style="left:31.2px;color:#e8bf6a">&lt;</span><span class="ck" style="left:39.0px;color:#2bb197">TaskDelegateForm</span><span class="ck" style="left:171.6px;color:#bababa">ref=</span><span class="ck" style="left:202.8px;color:#a5c25c">&quot;taskDelegateForm&quot;</span><span class="ck" style="left:351.0px;color:#bababa">@success=</span><span class="ck" style="left:421.2px;color:#a5c25c">&quot;</span><span class="ck" style="left:429.0px;color:#9876aa">getDetail</span><span class="ck" style="left:499.2px;color:#a5c25c">&quot;</span><span class="ck" style="left:514.8px;color:#e8bf6a">/&gt;</span></div>
<div class="ln" style="top:478px">130</div>
<div class="cl" style="top:478px"><span class="ck" style="left:31.2px;color:#808080">&lt;!--</span><span class="cj" style="left:70.2px;color:#808080">弹</span><span class="cj" style="left:83.2px;color:#808080">窗</span><span class="cj" style="left:96.2px;color:#808080">：</span><span class="cj" style="left:109.2px;color:#808080">加</span><span class="cj" style="left:122.2px;color:#808080">签</span><span class="cj" style="left:135.2px;color:#808080">，</span><span class="cj" style="left:148.2px;color:#808080">当</span><span class="cj" style="left:161.2px;color:#808080">前</span><span class="cj" style="left:174.2px;color:#808080">任</span><span class="cj" style="left:187.2px;color:#808080">务</span><span class="cj" style="left:200.2px;color:#808080">审</span><span class="cj" style="left:213.2px;color:#808080">批</span><span class="cj" style="left:226.2px;color:#808080">人</span><span class="cj" style="left:239.2px;color:#808080">为</span><span class="ck" style="left:252.2px;color:#808080">A</span><span class="cj" style="left:260.0px;color:#808080">，</span><span class="cj" style="left:273.0px;color:#808080">向</span><span class="cj" style="left:286.0px;color:#808080">前</span><span class="cj" style="left:299.0px;color:#808080">加</span><span class="cj" style="left:312.0px;color:#808080">签</span><span class="cj" style="left:325.0px;color:#808080">选</span><span class="cj" style="left:338.0px;color:#808080">了</span><span class="cj" style="left:351.0px;color:#808080">一</span><span class="cj" style="left:364.0px;color:#808080">个</span><span class="ck" style="left:377.0px;color:#808080">C</span><span class="cj" style="left:384.8px;color:#808080">，</span><span class="cj" style="left:397.8px;color:#808080">则</span><span class="cj" style="left:410.8px;color:#808080">需</span><span class="cj" style="left:423.8px;color:#808080">要</span><span class="ck" style="left:436.8px;color:#808080">C</span><span class="cj" style="left:444.6px;color:#808080">先</span><span class="cj" style="left:457.6px;color:#808080">审</span><span class="cj" style="left:470.6px;color:#808080">批</span><span class="cj" style="left:483.6px;color:#808080">，</span><span class="cj" style="left:496.6px;color:#808080">然</span><span class="cj" style="left:509.6px;color:#808080">后</span><span class="cj" style="left:522.6px;color:#808080">再</span><span class="cj" style="left:535.6px;color:#808080">是</span><span class="ck" style="left:548.6px;color:#808080">A</span><span class="cj" style="left:556.4px;color:#808080">审</span><span class="cj" style="left:569.4px;color:#808080">批</span><span class="cj" style="left:582.4px;color:#808080">，</span><span class="cj" style="left:595.4px;color:#808080">向</span><span class="cj" style="left:608.4px;color:#808080">后</span><span class="cj" style="left:621.4px;color:#808080">加</span><span class="cj" style="left:634.4px;color:#808080">签</span><span class="ck" style="left:647.4px;color:#808080">B</span><span class="cj" style="left:655.2px;color:#808080">，</span><span class="ck" style="left:668.2px;color:#808080">A</span><span class="cj" style="left:676.0px;color:#808080">审</span><span class="cj" style="left:689.0px;color:#808080">批</span><span class="cj" style="left:702.0px;color:#808080">完</span><span class="cj" style="left:715.0px;color:#808080">，</span><span class="cj" style="left:728.0px;color:#808080">需</span><span class="cj" style="left:741.0px;color:#808080">要</span><span class="ck" style="left:754.0px;color:#808080">B</span><span class="cj" style="left:761.8px;color:#808080">再</span><span class="cj" style="left:774.8px;color:#808080">审</span><span class="cj" style="left:787.8px;color:#808080">批</span><span class="cj" style="left:800.8px;color:#808080">完</span><span class="cj" style="left:813.8px;color:#808080">，</span><span class="cj" style="left:826.8px;color:#808080">才</span><span class="cj" style="left:839.8px;color:#808080">算</span><span class="cj" style="left:852.8px;color:#808080">完</span><span class="cj" style="left:865.8px;color:#808080">成</span><span class="ck" style="left:886.6px;color:#808080">--&gt;</span></div>
<div class="ln" style="top:500px">131</div>
<div class="cl" style="top:500px"><span class="ck" style="left:31.2px;color:#e8bf6a">&lt;</span><span class="ck" style="left:39.0px;color:#2bb197">TaskSignCreateForm</span><span class="ck" style="left:187.2px;color:#bababa">ref=</span><span class="ck" style="left:218.4px;color:#a5c25c">&quot;taskSignCreateFormRef&quot;</span><span class="ck" style="left:405.6px;color:#bababa">@success=</span><span class="ck" style="left:475.8px;color:#a5c25c">&quot;</span><span class="ck" style="left:483.6px;color:#9876aa">getDetail</span><span class="ck" style="left:553.8px;color:#a5c25c">&quot;</span><span class="ck" style="left:569.4px;color:#e8bf6a">/&gt;</span></div>
<div class="ln" style="top:522px">132</div>
<div class="cl" style="top:522px"><span class="ck" style="left:15.6px;color:#e8bf6a">&lt;/</span><span class="ck" style="left:31.2px;color:#2bb197">ContentWrap</span><span class="ck" style="left:117.0px;color:#e8bf6a">&gt;</span></div>
<div class="ln" style="top:544px">133</div>
<div class="cl" style="top:544px"><span class="ck" style="left:0.0px;color:#e8bf6a">&lt;/</span><span class="ck" style="left:15.6px;color:#2bb197">template</span><span class="ck" style="left:78.0px;color:#e8bf6a">&gt;</span></div>
<div class="ln" style="top:566px">134</div>
<div class="cl" style="top:566px"><span class="ck" style="left:0.0px;color:#e8bf6a">&lt;</span><span class="ck" style="left:7.8px;color:#2bb197">script</span><span class="ck" style="left:62.4px;color:#bababa">lang=</span><span class="ck" style="left:101.4px;color:#a5c25c">&quot;ts&quot;</span><span class="ck" style="left:140.4px;color:#bababa">setup</span><span class="ck" style="left:179.4px;color:#e8bf6a">&gt;</span></div>
<div class="ln" style="top:588px">135</div>
<div class="cl" style="top:588px"><span class="ck" style="left:0.0px;color:#cc7832">import</span><b class="fb" style="left:54.6px;width:23.4px;background:#3a3a3a"></b><span class="ck" style="left:54.6px;color:#a9b7c6">...</span></div>
<div class="ln" style="top:610px">150</div>
<div class="cl" style="top:610px"></div>
<div class="ln" style="top:632px">151</div>
<div class="cl" style="top:632px"><span class="ck" style="left:0.0px;color:#629755">/**</span><span class="cj" style="left:31.2px;color:#629755">加</span><span class="cj" style="left:44.2px;color:#629755">载</span><span class="cj" style="left:57.2px;color:#629755">流</span><span class="cj" style="left:70.2px;color:#629755">程</span><span class="cj" style="left:83.2px;color:#629755">实</span><span class="cj" style="left:96.2px;color:#629755">例</span><span class="ck" style="left:117.0px;color:#629755">*/</span></div>
<div class="ln" style="top:654px">152</div>
<div class="cl" style="top:654px"><span class="ck" style="left:0.0px;color:#cc7832">const</span><span class="ck" style="left:46.8px;color:#a9b7c6">BusinessFormComponent</span><span class="ck" style="left:218.4px;color:#a9b7c6">=</span><span class="ck" style="left:234.0px;color:#b483d0;font-style:italic">ref</span><span class="ck" style="left:257.4px;color:#a9b7c6">(</span><span class="ck" style="left:265.2px;color:#cc7832">null</span><span class="ck" style="left:296.4px;color:#a9b7c6">)</span><span class="ck" style="left:312.0px;color:#808080">//</span><span class="cj" style="left:335.4px;color:#808080">异</span><span class="cj" style="left:348.4px;color:#808080">步</span><span class="cj" style="left:361.4px;color:#808080">组</span><span class="cj" style="left:374.4px;color:#808080">件</span></div>
<div class="ln" style="top:676px">153</div>
<div class="cl" style="top:676px"><span class="ck" style="left:0.0px;color:#cc7832">const</span><span class="ck" style="left:46.8px;color:#ffc66d">getProcessInstance</span><span class="ck" style="left:195.0px;color:#a9b7c6">=</span><span class="ck" style="left:210.6px;color:#cc7832">async</span><span class="ck" style="left:257.4px;color:#a9b7c6">()</span><span class="ck" style="left:280.8px;color:#a9b7c6">=&gt;</span><b class="fb" style="left:304.2px;width:7.8px;background:#3b514d"></b><span class="ck" style="left:304.2px;color:#ffef28">{</span></div>
<div class="ln" style="top:698px">154</div>
<div class="cl" style="top:698px"><span class="ck" style="left:15.6px;color:#cc7832">try</span><span class="ck" style="left:46.8px;color:#a9b7c6">{</span></div>
<div class="ln" style="top:720px">155</div>
<div class="cl" style="top:720px"><span class="ck" style="left:31.2px;color:#a9b7c6">processInstanceLoading.</span><span class="ck" style="left:210.6px;color:#9876aa">value</span><span class="ck" style="left:257.4px;color:#a9b7c6">=</span><span class="ck" style="left:273.0px;color:#cc7832">true</span></div>
<div class="ln" style="top:742px">156</div>
<div class="cl" style="top:742px"><span class="ck" style="left:31.2px;color:#cc7832">const</span><span class="ck" style="left:78.0px;color:#a9b7c6">data</span><span class="ck" style="left:117.0px;color:#a9b7c6">=</span><span class="ck" style="left:132.6px;color:#cc7832">await</span><span class="ck" style="left:179.4px;color:#a9b7c6">ProcessInstanceApi.</span><span class="ck" style="left:327.6px;color:#ffc66d">getProcessInstance</span><span class="ck" style="left:468.0px;color:#a9b7c6">(id)</span></div>
<div class="ln" style="top:764px">157</div>
<div class="cl" style="top:764px"><span class="ck" style="left:31.2px;color:#cc7832">if</span><span class="ck" style="left:54.6px;color:#a9b7c6">(!data)</span><b class="fb" style="left:117.0px;width:39.0px;background:#3a3a3a"></b><span class="ck" style="left:117.0px;color:#a9b7c6">{...}</span></div>
<div class="ln" style="top:786px">161</div>
<div class="cl" style="top:786px"><span class="ck" style="left:31.2px;color:#a9b7c6">processInstance.</span><span class="ck" style="left:156.0px;color:#9876aa">value</span><span class="ck" style="left:202.8px;color:#a9b7c6">=</span><span class="ck" style="left:218.4px;color:#a9b7c6">data</span></div>
<div class="ln" style="top:808px">162</div>
<div class="cl" style="top:808px"></div>
<div class="ln" style="top:830px">163</div>
<div class="cl" style="top:830px"><span class="ck" style="left:31.2px;color:#808080">//</span><span class="cj" style="left:54.6px;color:#808080">设</span><span class="cj" style="left:67.6px;color:#808080">置</span><span class="cj" style="left:80.6px;color:#808080">表</span><span class="cj" style="left:93.6px;color:#808080">单</span><span class="cj" style="left:106.6px;color:#808080">信</span><span class="cj" style="left:119.6px;color:#808080">息</span></div>
<div class="ln" style="top:852px">164</div>
<div class="cl" style="top:852px"><span class="ck" style="left:31.2px;color:#cc7832">const</span><span class="ck" style="left:78.0px;color:#a9b7c6">processDefinition</span><span class="ck" style="left:218.4px;color:#a9b7c6">=</span><span class="ck" style="left:234.0px;color:#a9b7c6">data.</span><span class="ck" style="left:273.0px;color:#9876aa">processDefinition</span></div>
<div class="ln" style="top:874px">165</div>
<div class="cl" style="top:874px"><span class="ck" style="left:31.2px;color:#cc7832">if</span><span class="ck" style="left:54.6px;color:#a9b7c6">(processDefinition.formType</span><span class="ck" style="left:273.0px;color:#a9b7c6">===</span><span class="ck" style="left:304.2px;color:#6897bb">10</span><span class="ck" style="left:319.8px;color:#a9b7c6">)</span><b class="fb" style="left:335.4px;width:39.0px;background:#3a3a3a"></b><span class="ck" style="left:335.4px;color:#c75450">{...}</span><span class="ck" style="left:382.2px;color:#cc7832">else</span><span class="ck" style="left:421.2px;color:#a9b7c6">{</span></div>
<div class="ln" style="top:896px">178</div>
<div class="cl" style="top:896px"><span class="ck" style="left:46.8px;color:#808080">//</span><span class="cj" style="left:70.2px;color:#808080">注</span><span class="cj" style="left:83.2px;color:#808080">意</span><span class="cj" style="left:96.2px;color:#808080">：</span><span class="ck" style="left:109.2px;color:#808080">data.processDefinition.formCustomViewPath</span><span class="cj" style="left:436.8px;color:#808080">是</span><span class="cj" style="left:449.8px;color:#808080">组</span><span class="cj" style="left:462.8px;color:#808080">件</span><span class="cj" style="left:475.8px;color:#808080">的</span><span class="cj" style="left:488.8px;color:#808080">全</span><span class="cj" style="left:501.8px;color:#808080">路</span><span class="cj" style="left:514.8px;color:#808080">径</span><span class="cj" style="left:527.8px;color:#808080">，</span><span class="cj" style="left:540.8px;color:#808080">例</span><span class="cj" style="left:553.8px;color:#808080">如</span><span class="cj" style="left:566.8px;color:#808080">说</span><span class="cj" style="left:579.8px;color:#808080">：</span><span class="ck" style="left:592.8px;color:#808080">/crm/contract/detail/index.vue</span></div>
<div class="ln" style="top:918px">179</div>
<div class="cl" style="top:918px"><span class="ck" style="left:46.8px;color:#a9b7c6">BusinessFormComponent.</span><span class="ck" style="left:218.4px;color:#9876aa">value</span><span class="ck" style="left:265.2px;color:#a9b7c6">=</span><span class="ck" style="left:280.8px;color:#ffc66d">registerComponent</span><span class="ck" style="left:413.4px;color:#a9b7c6">(data.</span><span class="ck" style="left:460.2px;color:#9876aa">processDefinition</span><span class="ck" style="left:592.8px;color:#a9b7c6">.formCustomViewPath)</span></div>
<div class="ln" style="top:940px">180</div>
<div class="cl" style="top:940px"><span class="ck" style="left:31.2px;color:#a9b7c6">}</span></div>
<div class="ln" style="top:962px">181</div>
<div class="cl" style="top:962px"></div>
<div class="a" style="left:532px;top:69px;width:1px;height:902px;background:#393939"></div>
<div class="a" style="left:465px;top:610px;width:4px;height:361px;background:#394c37"></div>
<div class="a" style="left:458px;top:27px;width:927px;height:42px;background:#3c3f41;z-index:1"></div>
<div class="a" style="left:458px;top:27px;width:124px;height:42px;background:#4d5053;background-image:repeating-conic-gradient(#55585b 0 25%, #4a4d50 0 50%);background-size:3px 3px;z-index:1"></div>
<div class="a" style="left:458px;top:66px;width:124px;height:3px;border-radius:1.5px;background:#4a88c7;z-index:1"></div>
<div class="a" style="left:492px;top:39px;height:20px;line-height:20px;font-size:13px;letter-spacing:0.35px;color:#6a9fd3;z-index:1">index.vue</div>
<svg class="a" style="left:560px;top:42px;z-index:1" width="14" height="14" viewBox="560 42 14 14"><path d="M562.8 44.8L569.8 51.8M569.8 44.8L562.8 51.8" stroke="#75787b" stroke-width="1.2"/></svg>
<div style="position:absolute;z-index:1;left:0;top:0"><svg width="14" height="13" viewBox="0 0 14 13" style="position:absolute;left:471px;top:41px"><path d="M0 0.3h3.3L7 6.8 10.7 0.3H14L7 12.3z" fill="#42b883"/><path d="M3.3 0.3h2.3L7 2.8 8.4 0.3h2.3L7 6.8z" fill="#34495e"/></svg></div>
<div class="a" style="left:0;top:27px;width:1385px;height:1px;background:#44474a;z-index:1"></div>
<div class="a" style="left:582px;top:68px;width:803px;height:1px;background:#333538;z-index:1"></div>
<div class="a" style="left:558.5px;top:824px;width:816px;height:139.6px;border:3.5px solid #f7417c;z-index:2"></div>
<div class="a" style="left:2px;top:33px;width:30px;height:30px;border-radius:6px;background:#55585c;background-image:repeating-conic-gradient(#5a5d61 0 25%, #4f5256 0 50%);background-size:3px 3px"></div>
<svg class="a" style="left:0;top:27px" width="37" height="944" viewBox="0 27 37 944"><path d="M8.8 42.6c0-.8.6-1.4 1.4-1.4h4.6l1.9 2.1h7.2c.8 0 1.4.6 1.4 1.4v8.3c0 .8-.6 1.4-1.4 1.4H10.2c-.8 0-1.4-.6-1.4-1.4z" fill="none" stroke="#cfd1d4" stroke-width="1.3"/><line x1="7" y1="88" x2="13.5" y2="88" stroke="#cfd1d4" stroke-width="1.4"/><circle cx="17" cy="88" r="3.3" fill="none" stroke="#cfd1d4" stroke-width="1.4"/><line x1="20.5" y1="88" x2="27" y2="88" stroke="#cfd1d4" stroke-width="1.4"/><circle cx="13.9" cy="123.9" r="3.1" fill="none" stroke="#cfd1d4" stroke-width="1.5"/><path d="M17.6 123.2A3.4 3.4 0 0 1 24.4 124.5" fill="none" stroke="#cfd1d4" stroke-width="1.5"/><path d="M10.5 128.2C8.6 128.8 7.5 130.4 7.5 132.3 7.5 134.6 10 136 14.5 136.3L14.8 134.6C11.8 134 10.6 133.3 10.6 132.2 10.6 131 11.2 130.3 12.3 129.8z" fill="#cfd1d4"/><circle cx="21.2" cy="132.1" r="5.3" fill="#cfd1d4"/><path d="M19.4 130.7c0-1.1.8-1.8 1.9-1.8s1.9.7 1.9 1.7c0 1.3-1.6 1.4-1.6 2.6" fill="none" stroke="#3c3f41" stroke-width="1.3"/><circle cx="21.6" cy="135" r=".75" fill="#3c3f41"/><rect x="9.5" y="161" width="6" height="6" rx="1.5" fill="none" stroke="#cfd1d4" stroke-width="1.3"/><rect x="9.5" y="169.5" width="6" height="6" rx="1.5" fill="none" stroke="#cfd1d4" stroke-width="1.3"/><rect x="18.5" y="169.5" width="6" height="6" rx="1.5" fill="none" stroke="#cfd1d4" stroke-width="1.3"/><circle cx="9.5" cy="208" r="1.4" fill="#cfd1d4"/><circle cx="17" cy="208" r="1.4" fill="#cfd1d4"/><circle cx="24.5" cy="208" r="1.4" fill="#cfd1d4"/><path d="M12.5 818.8h9.5l5 8-5 8h-9.5l-5-8z" fill="none" stroke="#cfd1d4" stroke-width="1.3"/><path d="M15 823v7.5l6-3.75z" fill="none" stroke="#cfd1d4" stroke-width="1.3"/><circle cx="15" cy="865.5" r="6" fill="none" stroke="#cfd1d4" stroke-width="1.4"/><line x1="19.3" y1="869.8" x2="25.5" y2="875.5" stroke="#cfd1d4" stroke-width="1.5"/><rect x="8.5" y="899" width="17.5" height="15.5" rx="1.5" fill="none" stroke="#cfd1d4" stroke-width="1.3"/><path d="M12 903.5l3 2.5-3 2.5" fill="none" stroke="#cfd1d4" stroke-width="1.2"/><line x1="16.5" y1="910" x2="21.5" y2="910" stroke="#cfd1d4" stroke-width="1.2"/><path d="M21.5 939.2A8.5 8.5 0 1 0 25.8 944" fill="none" stroke="#cfd1d4" stroke-width="1.4"/><line x1="17" y1="942" x2="17" y2="949" stroke="#cfd1d4" stroke-width="1.6"/><circle cx="17" cy="952" r="1" fill="#cfd1d4"/><circle cx="23.8" cy="940.2" r="3.6" fill="#e5534b"/></svg>
<svg class="a" style="left:300px;top:30px" width="157" height="36" viewBox="300 30 157 36"><circle cx="332.2" cy="48.1" r="6.6" fill="none" stroke="#cfd1d4" stroke-width="1.3"/><line x1="332.2" y1="41.5" x2="332.2" y2="44.5" stroke="#cfd1d4" stroke-width="1.3"/><line x1="332.2" y1="51.7" x2="332.2" y2="54.7" stroke="#cfd1d4" stroke-width="1.3"/><line x1="325.6" y1="48.1" x2="328.6" y2="48.1" stroke="#cfd1d4" stroke-width="1.3"/><line x1="335.8" y1="48.1" x2="338.8" y2="48.1" stroke="#cfd1d4" stroke-width="1.3"/><path d="M354 46.5l4.2-4 4.2 4M354 50l4.2 4 4.2-4" fill="none" stroke="#cfd1d4" stroke-width="1.2"/><path d="M380 42.2l4.1 4.2 4.1-4.2M380 54.5l4.1-4.2 4.1 4.2" fill="none" stroke="#cfd1d4" stroke-width="1.2"/><circle cx="410.2" cy="43" r="1.3" fill="#cfd1d4"/><circle cx="410.2" cy="48.1" r="1.3" fill="#cfd1d4"/><circle cx="410.2" cy="53.1" r="1.3" fill="#cfd1d4"/><line x1="429.7" y1="48.1" x2="442.4" y2="48.1" stroke="#cfd1d4" stroke-width="1.3"/><path d="M104 48l3 3 3-3" fill="none" stroke="#cfd1d4" stroke-width="1.2" transform="translate(0,0)"/></svg>
<svg class="a" style="left:100px;top:45px" width="12" height="8" viewBox="0 0 12 8"><path d="M2 2l4 3.8L10 2" fill="none" stroke="#b8babd" stroke-width="1.2"/></svg>
<div class="a" style="left:71px;top:80px;width:7.3px;height:7.3px;border:1.4px solid #4f8fdc;border-radius:2px;background:#25294a"></div>
<div class="a" style="left:548px;top:69px;width:1px;height:452px;background:#373737"></div>
<div class="a" style="left:564px;top:69px;width:1px;height:100px;background:#373737"></div>
<div class="a" style="left:580px;top:125px;width:1px;height:22px;background:#373737"></div>
<div class="a" style="left:548px;top:719px;width:1px;height:252px;background:#373737"></div>
<svg class="a" style="left:521px;top:241px" width="8" height="10" viewBox="0 0 8 10"><path d="M2 1l4 4-4 4" fill="none" stroke="#6e7073" stroke-width="1.1"/></svg>
<svg class="a" style="left:521px;top:307px" width="8" height="10" viewBox="0 0 8 10"><path d="M2 1l4 4-4 4" fill="none" stroke="#6e7073" stroke-width="1.1"/></svg>
<svg class="a" style="left:521px;top:593px" width="8" height="10" viewBox="0 0 8 10"><path d="M2 1l4 4-4 4" fill="none" stroke="#6e7073" stroke-width="1.1"/></svg>
<svg class="a" style="left:521px;top:769px" width="8" height="10" viewBox="0 0 8 10"><path d="M2 1l4 4-4 4" fill="none" stroke="#6e7073" stroke-width="1.1"/></svg>
<svg class="a" style="left:521px;top:879px" width="8" height="10" viewBox="0 0 8 10"><path d="M2 1l4 4-4 4" fill="none" stroke="#6e7073" stroke-width="1.1"/></svg>
<svg class="a" style="left:0;top:0" width="1385" height="971"><path d="M581.0 936.5 L583.2 934.5 L585.4 936.5 L587.6 934.5 L589.8 936.5 L592.0 934.5 L594.2 936.5 L596.4 934.5 L598.6 936.5 L600.8 934.5 L603.0 936.5 L605.2 934.5 L607.4 936.5 L609.6 934.5 L611.8 936.5 L614.0 934.5 L616.2 936.5 L618.4 934.5 L620.6 936.5 L622.8 934.5 L625.0 936.5 L627.2 934.5 L629.4 936.5 L631.6 934.5 L633.8 936.5 L636.0 934.5 L638.2 936.5 L640.4 934.5 L642.6 936.5 L644.8 934.5 L647.0 936.5 L649.2 934.5 L651.4 936.5 L653.6 934.5 L655.8 936.5 L658.0 934.5 L660.2 936.5 L662.4 934.5 L664.6 936.5 L666.8 934.5 L669.0 936.5 L671.2 934.5 L673.4 936.5 L675.6 934.5 L677.8 936.5 L680.0 934.5 L682.2 936.5 L684.4 934.5 L686.6 936.5 L688.8 934.5 L691.0 936.5 L693.2 934.5 L695.4 936.5 L697.6 934.5 L699.8 936.5 L702.0 934.5 L704.2 936.5 L706.4 934.5 L708.6 936.5 L710.8 934.5 L713.0 936.5 L715.2 934.5 L717.4 936.5 L719.6 934.5 L721.8 936.5 L724.0 934.5 L726.2 936.5 L728.4 934.5 L730.6 936.5 L732.8 934.5 L735.0 936.5 L737.2 934.5 L739.4 936.5 L741.6 934.5 L743.8 936.5 L746.0 934.5 L748.2 936.5 L750.4 934.5 L752.6 936.5 L754.8 934.5 L757.0 936.5 L759.2 934.5 L761.4 936.5 L763.6 934.5 L765.8 936.5 L768.0 934.5 L770.2 936.5 L772.4 934.5 L774.6 936.5 L776.8 934.5 L779.0 936.5 L781.2 934.5 L783.4 936.5 L785.6 934.5 L787.8 936.5 L790.0 934.5 L792.2 936.5" fill="none" stroke="#b03b3e" stroke-width="1.1"/></svg>
<svg class="a" style="left:0;top:0" width="1385" height="971"><path d="M1135.0 936.5 L1137.2 934.5 L1139.4 936.5 L1141.6 934.5 L1143.8 936.5 L1146.0 934.5 L1148.2 936.5 L1150.4 934.5 L1152.6 936.5 L1154.8 934.5 L1157.0 936.5 L1159.2 934.5 L1161.4 936.5 L1163.6 934.5 L1165.8 936.5 L1168.0 934.5 L1170.2 936.5 L1172.4 934.5 L1174.6 936.5 L1176.8 934.5 L1179.0 936.5 L1181.2 934.5 L1183.4 936.5 L1185.6 934.5 L1187.8 936.5 L1190.0 934.5 L1192.2 936.5 L1194.4 934.5 L1196.6 936.5 L1198.8 934.5 L1201.0 936.5 L1203.2 934.5 L1205.4 936.5 L1207.6 934.5 L1209.8 936.5 L1212.0 934.5 L1214.2 936.5 L1216.4 934.5 L1218.6 936.5 L1220.8 934.5 L1223.0 936.5 L1225.2 934.5 L1227.4 936.5 L1229.6 934.5 L1231.8 936.5 L1234.0 934.5 L1236.2 936.5 L1238.4 934.5 L1240.6 936.5 L1242.8 934.5 L1245.0 936.5 L1247.2 934.5 L1249.4 936.5 L1251.6 934.5 L1253.8 936.5 L1256.0 934.5 L1258.2 936.5 L1260.4 934.5 L1262.6 936.5 L1264.8 934.5 L1267.0 936.5 L1269.2 934.5 L1271.4 936.5 L1273.6 934.5 L1275.8 936.5" fill="none" stroke="#878050" stroke-width="1.1"/></svg>
<svg class="a" style="left:0;top:0;z-index:3" width="1385" height="971" viewBox="0 0 1385 971"><path d="M641.6 814.4 C641.9 813.2 641.7 811.0 643.2 807.2 C644.8 803.4 648.0 797.8 650.9 791.8 C653.8 785.8 657.8 778.1 660.7 771.2 C663.6 764.3 666.2 755.8 668.4 750.6 C670.5 745.5 671.7 745.4 673.6 740.3 C675.5 735.2 677.1 727.4 679.6 719.9 C682.1 712.4 685.8 702.9 688.7 695.2 C691.6 687.5 695.4 679.3 696.9 673.8 C698.4 668.3 697.2 667.0 697.7 662.3 C698.2 657.6 699.0 654.0 700.2 645.8 C701.4 637.6 703.7 623.9 705.1 612.9 C706.5 601.9 707.8 588.5 708.9 580.0 C710.0 571.5 710.6 568.9 711.5 561.7 C712.4 554.5 713.5 545.2 714.4 537.0 C715.2 528.8 716.0 519.2 716.6 512.3 C717.2 505.4 717.3 504.0 717.7 495.8 C718.1 487.6 718.7 473.9 718.9 462.9 C719.1 451.9 719.2 439.9 718.9 430.0 C718.6 420.1 717.4 412.0 717.0 403.5 C716.6 395.0 716.4 387.1 716.5 378.8 C716.6 370.6 717.3 362.2 717.5 354.0 C717.7 345.8 718.0 337.6 717.9 329.4 C717.8 321.2 717.7 312.9 717.0 304.7 C716.3 296.5 714.7 287.2 713.7 280.0 C712.7 272.8 712.4 270.2 711.0 261.7 C709.6 253.2 707.1 239.8 705.3 228.8 C703.5 217.8 701.9 205.4 700.3 195.8 C698.6 186.2 697.4 177.8 695.4 171.0 C693.4 164.2 690.2 159.9 688.0 154.7 C685.8 149.5 683.2 142.4 682.2 139.9" fill="none" stroke="#f7417c" stroke-width="3.6" stroke-linecap="round"/><path d="M678.9 163.7 L682.2 139.9 L703.1 152.2" fill="none" stroke="#f7417c" stroke-width="3.6" stroke-linecap="round" stroke-linejoin="round"/><path d="M901.6 676 L909.5 687 Q911.8 690 914.8 687.6 L920 683 C930 674 937 663 942.4 653.3" fill="none" stroke="#f7417c" stroke-width="3.6" stroke-linecap="round" stroke-linejoin="round"/><path d="M817 941.2 C840 940 855 937.5 867 938.5 C885 940 900 943 910 944 C930 946.5 945 948.5 962 948.5 C990 948.5 1030 947.5 1050 947.6 C1070 947 1080 945 1086 945.2 C1110 946 1130 951.7 1149 951.7 C1175 952 1200 951.5 1212.5 951.2 C1230 949 1240 946 1248.6 945 C1265 943 1280 942 1288 941.6" fill="none" stroke="#f7417c" stroke-width="3.5" stroke-linecap="round"/></svg>
</body></html>
